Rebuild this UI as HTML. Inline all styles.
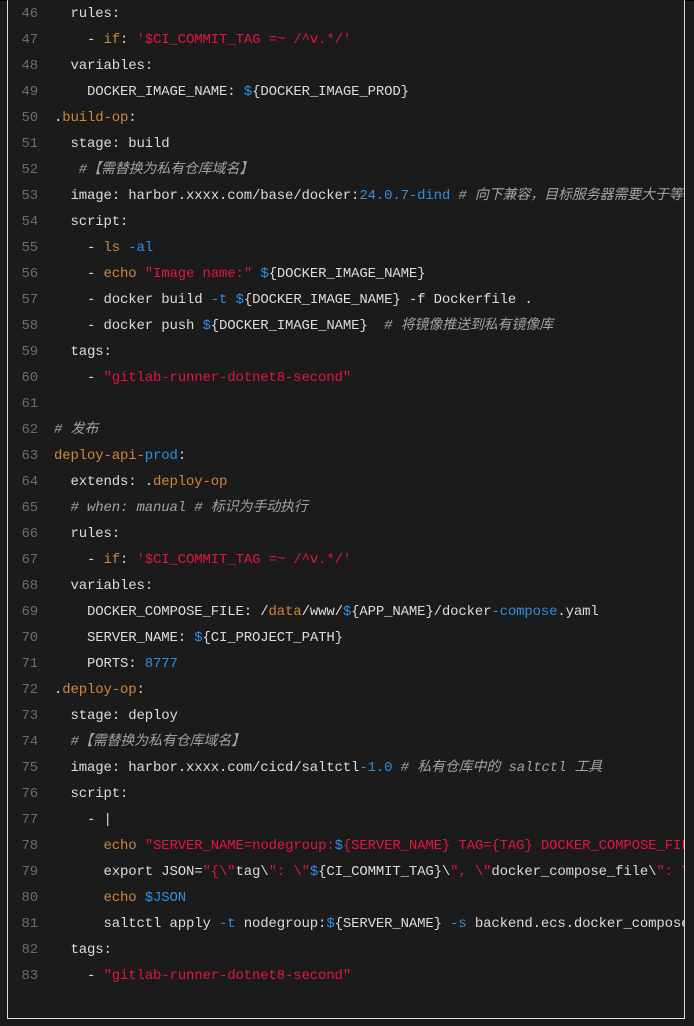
<!DOCTYPE html>
<html><head><meta charset="utf-8"><style>
html,body{margin:0;padding:0;background:#1b1b1b;width:694px;height:1026px;overflow:hidden}
.top{position:absolute;left:0;top:0;width:694px;height:1px;background:#000}
.box{position:absolute;left:7px;top:-2px;width:676px;height:1020px;border:1px solid #dcdcdc;border-top:none;background:#1b1b1b;overflow:hidden}
pre{margin:0;position:absolute;left:0;top:3px;font-family:"Liberation Mono","Noto Sans CJK SC",monospace;font-size:14px;letter-spacing:-0.15px;line-height:26px;color:#dcdcdc;white-space:pre}
.n{display:inline-block;width:30px;text-align:right;color:#6c6c6c;margin-right:16px}
.o{color:#cf873c}.r{color:#e3153d}.b{color:#2f8fe0}.c{color:#a3a3a3;font-style:italic}
</style></head><body><div class="top"></div><div class="box"><pre>
<span class="n">46</span>  rules:
<span class="n">47</span>    - <span class="o">if</span>: <span class="r">'$CI_COMMIT_TAG =~ /^v.*/'</span>
<span class="n">48</span>  variables:
<span class="n">49</span>    DOCKER_IMAGE_NAME: <span class="b">$</span>{DOCKER_IMAGE_PROD}
<span class="n">50</span>.<span class="o">build-op</span>:
<span class="n">51</span>  stage: build
<span class="n">52</span>   <span class="c">#【需替换为私有仓库域名】</span>
<span class="n">53</span>  image: harbor.xxxx.com/base/docker:<span class="b">24.0.7-dind</span> <span class="c"># 向下兼容，目标服务器需要大于等于</span>
<span class="n">54</span>  script:
<span class="n">55</span>    - <span class="o">ls</span> <span class="b">-al</span>
<span class="n">56</span>    - <span class="o">echo</span> <span class="r">"Image name:"</span> <span class="b">$</span>{DOCKER_IMAGE_NAME}
<span class="n">57</span>    - docker build <span class="b">-t</span> <span class="b">$</span>{DOCKER_IMAGE_NAME} -f Dockerfile .
<span class="n">58</span>    - docker push <span class="b">$</span>{DOCKER_IMAGE_NAME}  <span class="c"># 将镜像推送到私有镜像库</span>
<span class="n">59</span>  tags:
<span class="n">60</span>    - <span class="r">"gitlab-runner-dotnet8-second"</span>
<span class="n">61</span>
<span class="n">62</span><span class="c"># 发布</span>
<span class="n">63</span><span class="o">deploy-api-</span><span class="b">prod</span>:
<span class="n">64</span>  extends: .<span class="o">deploy-op</span>
<span class="n">65</span>  <span class="c"># when: manual # 标识为手动执行</span>
<span class="n">66</span>  rules:
<span class="n">67</span>    - <span class="o">if</span>: <span class="r">'$CI_COMMIT_TAG =~ /^v.*/'</span>
<span class="n">68</span>  variables:
<span class="n">69</span>    DOCKER_COMPOSE_FILE: /<span class="o">data</span>/www/<span class="b">$</span>{APP_NAME}/docker<span class="b">-compose</span>.yaml
<span class="n">70</span>    SERVER_NAME: <span class="b">$</span>{CI_PROJECT_PATH}
<span class="n">71</span>    PORTS: <span class="b">8777</span>
<span class="n">72</span>.<span class="o">deploy-op</span>:
<span class="n">73</span>  stage: deploy
<span class="n">74</span>  <span class="c">#【需替换为私有仓库域名】</span>
<span class="n">75</span>  image: harbor.xxxx.com/cicd/saltctl<span class="b">-1.0</span> <span class="c"># 私有仓库中的 saltctl 工具</span>
<span class="n">76</span>  script:
<span class="n">77</span>    - |
<span class="n">78</span>      <span class="o">echo</span> <span class="r">"SERVER_NAME=nodegroup:</span><span class="b">$</span><span class="r">{SERVER_NAME} TAG={TAG} DOCKER_COMPOSE_FILE=</span>
<span class="n">79</span>      export JSON=<span class="r">"{\"</span>tag\<span class="r">": \"</span><span class="b">$</span>{CI_COMMIT_TAG}\<span class="r">", \"</span>docker_compose_file\<span class="r">": \"</span>
<span class="n">80</span>      <span class="o">echo</span> <span class="b">$JSON</span>
<span class="n">81</span>      saltctl apply <span class="b">-t</span> nodegroup:<span class="b">$</span>{SERVER_NAME} <span class="b">-s</span> backend.ecs.docker_compose
<span class="n">82</span>  tags:
<span class="n">83</span>    - <span class="r">"gitlab-runner-dotnet8-second"</span>
</pre></div></body></html>
